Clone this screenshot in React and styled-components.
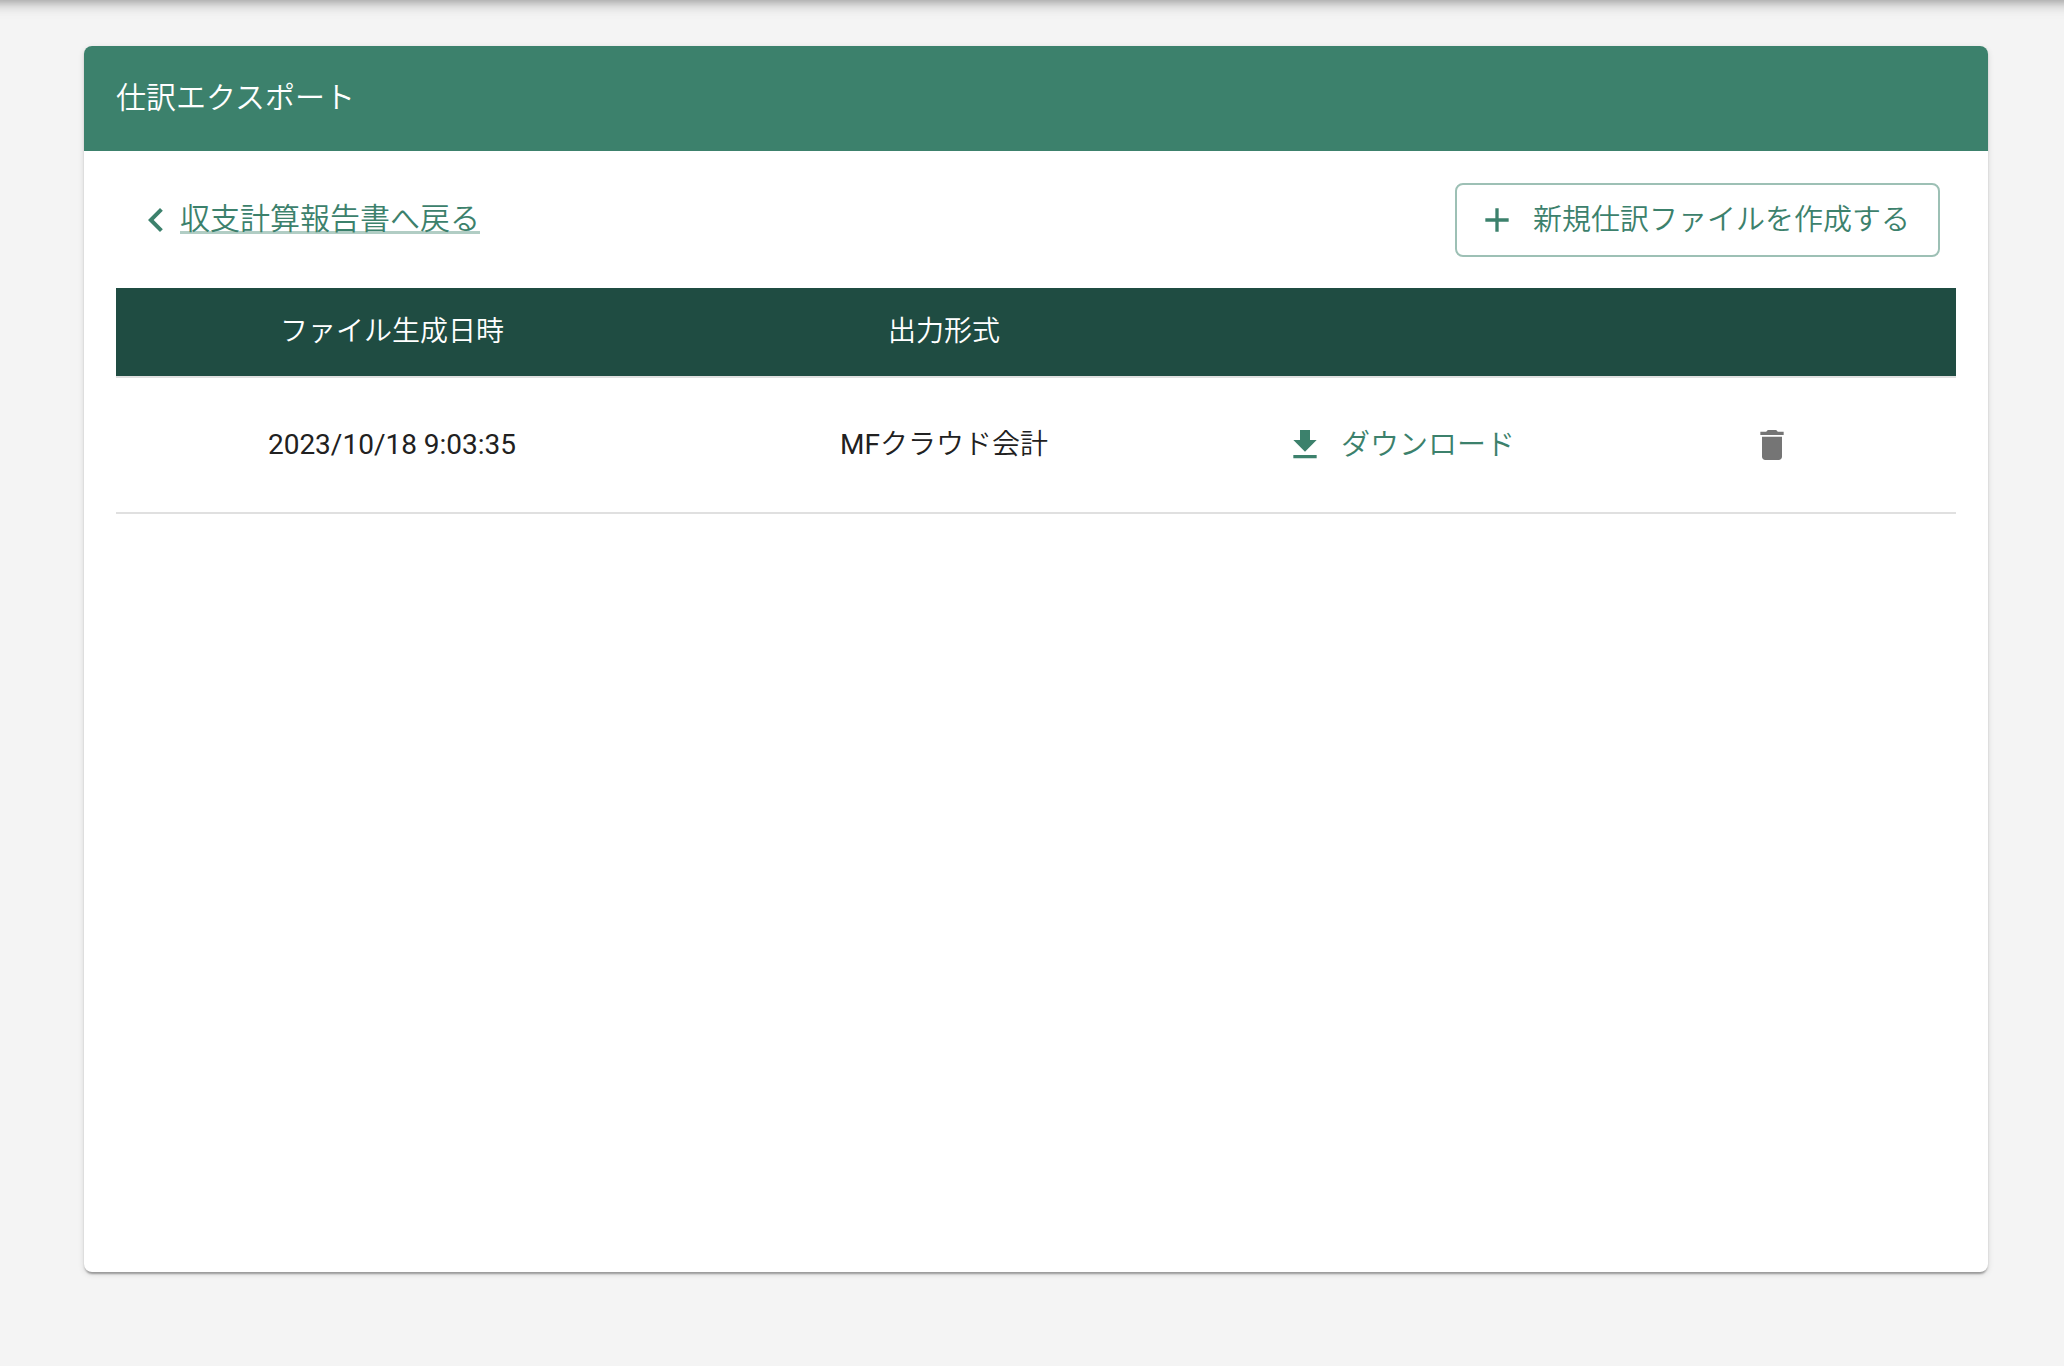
import React, { useState } from "react";
import styled, { createGlobalStyle } from "styled-components";

const GlobalStyle = createGlobalStyle`
	* {
		box-sizing: border-box;
	}
	body {
		margin: 0;
		overflow-x: hidden;
		background-color: #f4f4f4;
		color: #212121;
		font-family: Roboto, "Noto Sans CJK JP", sans-serif;
		font-size: 28px;
		line-height: 40px;
	}
`;
const AppBar = styled.header`
	height: 64px;
	margin: -66px -20px 0;
	background-color: #3c816c;
	box-shadow: 0 4px 8px -2px rgba(0, 0, 0, 0.2),
		0 8px 10px rgba(0, 0, 0, 0.14), 0 2px 20px rgba(0, 0, 0, 0.12);
`;
const Main = styled.main`
	padding: 48px 76px 94px 84px;
`;
const Card = styled.section`
	min-height: calc(100vh - 140px);
	border-radius: 8px;
	overflow: hidden;
	background-color: white;
	box-shadow: 0 4px 2px -2px rgba(0, 0, 0, 0.2),
		0 2px 2px rgba(0, 0, 0, 0.14), 0 2px 6px rgba(0, 0, 0, 0.12);
`;
const Title = styled.h1`
	display: flex;
	align-items: center;
	height: 105px;
	margin: 0;
	padding: 0 32px 2px;
	background-color: #3c816c;
	color: white;
	font-size: 30px;
	font-weight: 350;
`;
const Content = styled.div`
	padding: 0 32px 32px;
`;
const Toolbar = styled.div`
	display: flex;
	align-items: center;
	justify-content: space-between;
	padding: 32px 16px 31px;
`;
const Back = styled.div`
	display: flex;
	align-items: center;
	color: #3c816c;
`;
const BackLink = styled.a`
	padding-bottom: 2px;
	color: inherit;
	font-size: 30px;
	font-weight: 350;
	text-decoration: underline;
	text-decoration-color: rgba(60, 129, 108, 0.4);
	text-decoration-thickness: 3px;
	text-decoration-skip-ink: none;
	text-underline-offset: 2px;
`;
const Icon = styled.svg`
	flex: none;
	width: ${(props) => props.$size || 40}px;
	height: ${(props) => props.$size || 40}px;
	fill: currentColor;
`;
const Button = styled.button`
	display: inline-flex;
	align-items: center;
	gap: 16px;
	padding: 12px 16px 12px 8px;
	border: none;
	border-radius: 8px;
	background: none;
	color: #3c816c;
	font-family: inherit;
	font-size: 29px;
	font-weight: 350;
	line-height: 40px;
	cursor: pointer;
`;
const OutlinedButton = styled(Button)`
	padding: 15px 28px 15px 20px;
	border: 2px solid #9dc0b5;
`;
const IconButton = styled(Button)`
	padding: 12px;
	border-radius: 50%;
	color: #757575;
`;
const Table = styled.table`
	width: 100%;
	table-layout: fixed;
	border-collapse: separate;
	border-spacing: 0;
`;
const HeadCell = styled.th`
	width: ${(props) => props.$width};
	height: 90px;
	padding: 0 16px;
	border-bottom: 2px solid #e0e0e0;
	background-color: #1f4c42;
	background-clip: padding-box;
	color: white;
	font-weight: 350;
	text-align: center;
`;
const Cell = styled.td`
	height: 136px;
	padding: 0 16px;
	border-bottom: 2px solid #e0e0e0;
	text-align: center;
	vertical-align: middle;

	& > button {
		vertical-align: middle;
	}
`;
const Light = styled.span`
	font-weight: 350;
`;

export default function App() {
	const [files, setFiles] = useState([
		{ id: 1, createdAt: "2023/10/18 9:03:35", prefix: "MF", format: "クラウド会計" },
	]);

	function handleDelete(id) {
		setFiles(files.filter((file) => file.id !== id));
	}

	return (
		<>
			<GlobalStyle />
			<AppBar />
			<Main lang='ja'>
				<Card>
					<Title>仕訳エクスポート</Title>
					<Content>
						<Toolbar>
							<Back>
								<Icon $size={48} viewBox='0 0 24 24' aria-hidden='true'>
									<path d='M15.41 7.41 14 6l-6 6 6 6 1.41-1.41L10.83 12z' />
								</Icon>
								<BackLink href='#'>収支計算報告書へ戻る</BackLink>
							</Back>
							<OutlinedButton type='button'>
								<Icon viewBox='0 0 24 24' aria-hidden='true'>
									<path d='M19 13h-6v6h-2v-6H5v-2h6V5h2v6h6v2z' />
								</Icon>
								新規仕訳ファイルを作成する
							</OutlinedButton>
						</Toolbar>
						<Table>
							<thead>
								<tr>
									<HeadCell $width='30%'>ファイル生成日時</HeadCell>
									<HeadCell $width='30%'>出力形式</HeadCell>
									<HeadCell $width='20%' />
									<HeadCell $width='20%' />
								</tr>
							</thead>
							<tbody>
								{files.map((file) => (
									<tr key={file.id}>
										<Cell>{file.createdAt}</Cell>
										<Cell>
											{file.prefix}
											<Light>{file.format}</Light>
										</Cell>
										<Cell>
											<Button type='button'>
												<Icon viewBox='0 0 24 24' aria-hidden='true'>
													<path d='M19 9h-4V3H9v6H5l7 7 7-7zM5 18v2h14v-2H5z' />
												</Icon>
												ダウンロード
											</Button>
										</Cell>
										<Cell>
											<IconButton
												type='button'
												aria-label='削除'
												onClick={() => handleDelete(file.id)}
											>
												<Icon viewBox='0 0 24 24' aria-hidden='true'>
													<path d='M6 19c0 1.1.9 2 2 2h8c1.1 0 2-.9 2-2V7H6v12zM19 4h-3.5l-1-1h-5l-1 1H5v2h14V4z' />
												</Icon>
											</IconButton>
										</Cell>
									</tr>
								))}
							</tbody>
						</Table>
					</Content>
				</Card>
			</Main>
		</>
	);
}
